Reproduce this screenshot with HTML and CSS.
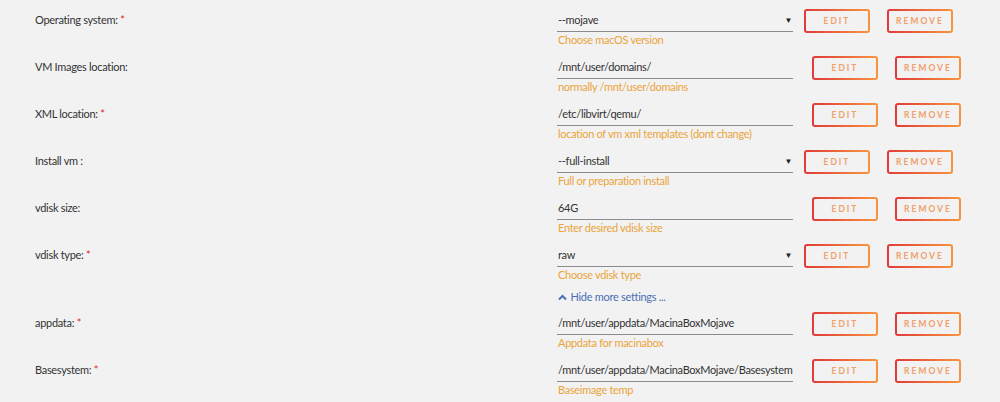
FILE: index.html
```html
<!DOCTYPE html>
<html>
  <head>
    <meta charset="utf8" />
    <title>Container settings</title>
    <link rel="stylesheet" href="styles.css">
  </head>
  <body>
    <div class="settings">
      <div class="row">
        <div class="label">Operating system: <span class="req">*</span></div>
        <div class="field">
          <div class="input select">--mojave<span class="arrow">&#9660;</span></div>
          <div class="help">Choose macOS version</div>
        </div>
        <div class="buttons near">
          <button class="btn">EDIT</button>
          <button class="btn">REMOVE</button>
        </div>
      </div>
      <div class="row">
        <div class="label">VM Images location:</div>
        <div class="field">
          <div class="input">/mnt/user/domains/</div>
          <div class="help">normally /mnt/user/domains</div>
        </div>
        <div class="buttons">
          <button class="btn">EDIT</button>
          <button class="btn">REMOVE</button>
        </div>
      </div>
      <div class="row">
        <div class="label">XML location: <span class="req">*</span></div>
        <div class="field">
          <div class="input">/etc/libvirt/qemu/</div>
          <div class="help">location of vm xml templates (dont change)</div>
        </div>
        <div class="buttons">
          <button class="btn">EDIT</button>
          <button class="btn">REMOVE</button>
        </div>
      </div>
      <div class="row">
        <div class="label">Install vm :</div>
        <div class="field">
          <div class="input select">--full-install<span class="arrow">&#9660;</span></div>
          <div class="help">Full or preparation install</div>
        </div>
        <div class="buttons near">
          <button class="btn">EDIT</button>
          <button class="btn">REMOVE</button>
        </div>
      </div>
      <div class="row">
        <div class="label">vdisk size:</div>
        <div class="field">
          <div class="input">64G</div>
          <div class="help">Enter desired vdisk size</div>
        </div>
        <div class="buttons">
          <button class="btn">EDIT</button>
          <button class="btn">REMOVE</button>
        </div>
      </div>
      <div class="row">
        <div class="label">vdisk type: <span class="req">*</span></div>
        <div class="field">
          <div class="input select">raw<span class="arrow">&#9660;</span></div>
          <div class="help">Choose vdisk type</div>
        </div>
        <div class="buttons near">
          <button class="btn">EDIT</button>
          <button class="btn">REMOVE</button>
        </div>
      </div>
      <div class="toggle">
        <a class="more">
          <svg width="9" height="7" viewBox="0 0 9 7"><path d="M1 5.5 4.5 2 8 5.5" fill="none" stroke="#4a6fb5" stroke-width="2"/></svg>
          Hide more settings ...
        </a>
      </div>
      <div class="row">
        <div class="label">appdata: <span class="req">*</span></div>
        <div class="field">
          <div class="input">/mnt/user/appdata/MacinaBoxMojave</div>
          <div class="help">Appdata for macinabox</div>
        </div>
        <div class="buttons">
          <button class="btn">EDIT</button>
          <button class="btn">REMOVE</button>
        </div>
      </div>
      <div class="row">
        <div class="label">Basesystem: <span class="req">*</span></div>
        <div class="field">
          <div class="input">/mnt/user/appdata/MacinaBoxMojave/Basesystem</div>
          <div class="help">Baseimage temp</div>
        </div>
        <div class="buttons">
          <button class="btn">EDIT</button>
          <button class="btn">REMOVE</button>
        </div>
      </div>
    </div>
  </body>
</html>
```

FILE: styles.css
```css
body {
  margin: 0;
  background: #f2f2f2;
  color: #333;
  font-family: Lato, "Noto Sans", sans-serif;
  font-size: 11px;
  letter-spacing: -0.3px;
}

.row {
  display: flex;
  height: 47px;
}

.label {
  flex: none;
  width: 557px;
  padding-left: 35px;
  box-sizing: border-box;
  padding-top: 13px;
  line-height: 14px;
}

.req {
  color: #e22828;
}

.field {
  flex: none;
  width: 236px;
}

.input {
  position: relative;
  height: 24px;
  margin-top: 8px;
  box-sizing: border-box;
  padding: 5px 0 0 1px;
  line-height: 14px;
  border-bottom: 1px solid #8c8c8c;
  white-space: nowrap;
}

.arrow {
  position: absolute;
  right: 1px;
  top: 5px;
  font-size: 8px;
  color: #222;
}

.help {
  margin-top: 1px;
  padding-left: 1px;
  line-height: 14px;
  color: #eba43a;
}

.buttons {
  display: flex;
  gap: 17px;
  margin-left: 19px;
  padding-top: 9px;
}

.buttons.near {
  margin-left: 11px;
}

.btn {
  width: 66px;
  height: 24px;
  padding: 0;
  border: 2px solid transparent;
  border-radius: 3px;
  background: linear-gradient(#f2f2f2, #f2f2f2) padding-box,
    linear-gradient(90deg, #e03a3a, #f8953f) border-box;
  color: #f0a06c;
  font-family: Lato, sans-serif;
  font-size: 8.5px;
  font-weight: bold;
  letter-spacing: 2px;
}

.toggle {
  height: 21px;
  padding-left: 558px;
  padding-top: 8px;
  box-sizing: border-box;
  line-height: 14px;
}

.more {
  color: #4a6fb5;
}

.more svg {
  margin-right: 1px;
}
```
